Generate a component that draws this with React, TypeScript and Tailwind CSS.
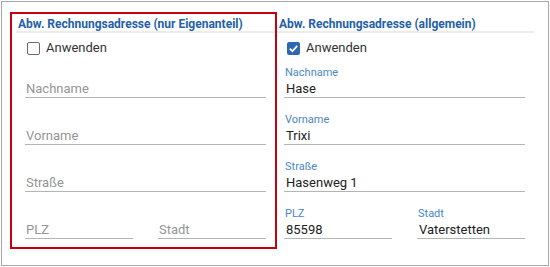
import React from 'react'

const font = { fontFamily: 'Roboto, "Liberation Sans", sans-serif' }

function Heading({ children }: { children: React.ReactNode }) {
  return (
    <div className="h-[16px] border-b-2 border-[#ececec] pl-[2px] text-[12px] leading-[14px] font-bold text-[#2461a8] whitespace-nowrap">
      {children}
    </div>
  )
}

function Check({ checked }: { checked: boolean }) {
  return (
    <div className="flex items-center h-[20px] gap-[6px]">
      {checked ? (
        <div className="w-[13px] h-[13px] rounded-[2px] bg-[#2e68b3] flex items-center justify-center">
          <svg width="11" height="11" viewBox="0 0 12 12">
            <path d="M2 6.2 L4.8 9 L10 3.2" fill="none" stroke="white" strokeWidth="2" />
          </svg>
        </div>
      ) : (
        <div className="w-[13px] h-[13px] rounded-[2px] border-[1.5px] border-[#6b6b6b] bg-white" />
      )}
      <span className="text-[13px] leading-[16px] text-[#333]">Anwenden</span>
    </div>
  )
}

function Field({ label, value }: { label: string; value?: string }) {
  const filled = value !== undefined
  return (
    <div className="flex flex-col">
      <div className="h-[13px] pl-[1px] text-[11px] leading-[13px] text-[#4a87c8]">{filled ? label : ''}</div>
      <div className={
        'mt-[1px] h-[18px] border-b border-[#b4b4b4] text-[13px] leading-[17px] ' +
        (filled ? 'pl-[2px] text-[#222]' : 'pl-[1px] text-[#959595]')
      }>
        {filled ? value : label}
      </div>
    </div>
  )
}

function Section({ title, checked, values, bodyClass, checkClass }: {
  title: string
  checked: boolean
  values?: Record<string, string>
  bodyClass: string
  checkClass: string
}) {
  const v = (k: string) => (values ? values[k] : undefined)
  return (
    <div className="flex flex-col">
      <Heading>{title}</Heading>
      <div className={'flex flex-col ' + bodyClass}>
        <div className={'mt-[5px] mb-[8px] ' + checkClass}>
          <Check checked={checked} />
        </div>
        <div className="flex flex-col gap-[15px]">
          <Field label="Nachname" value={v('nachname')} />
          <Field label="Vorname" value={v('vorname')} />
          <Field label="Straße" value={v('strasse')} />
          <div className="grid grid-cols-2 gap-[25px]">
            <Field label="PLZ" value={v('plz')} />
            <Field label="Stadt" value={v('stadt')} />
          </div>
        </div>
      </div>
    </div>
  )
}

export default function App() {
  return (
    <div className="w-[550px] h-[267px] bg-white p-[1px]" style={font}>
      <div className="w-[548px] h-[265px] border border-[#a8a8a8] pl-[8px] pt-[10px] flex items-start">
        <div className="w-[267px] h-[237px] border-2 border-[#c5000f] pl-[4px] pt-[3px]">
          <Section
            title="Abw. Rechnungsadresse (nur Eigenanteil)"
            checked={false}
            bodyClass="pl-[9px] pr-[9px]"
            checkClass="pl-[2px]"
          />
        </div>
        <div className="w-[257px] pt-[5px]">
          <Section
            title="Abw. Rechnungsadresse (allgemein)"
            checked={true}
            bodyClass="pl-[7px] pr-[9px]"
            checkClass="pl-[3px]"
            values={{ nachname: 'Hase', vorname: 'Trixi', strasse: 'Hasenweg 1', plz: '85598', stadt: 'Vaterstetten' }}
          />
        </div>
      </div>
    </div>
  )
}
